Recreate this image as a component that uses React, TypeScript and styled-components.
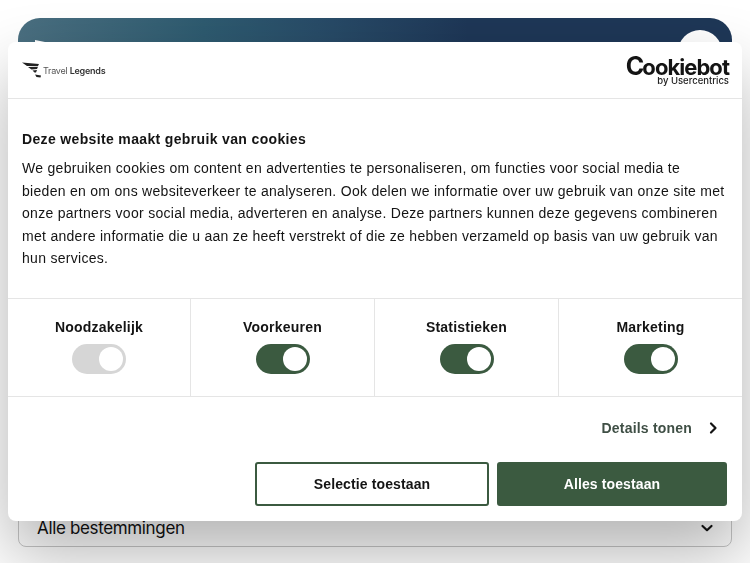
import React from "react";
import styled, { createGlobalStyle } from "styled-components";

const Global = createGlobalStyle`
  html, body { margin: 0; padding: 0; background: #fff; overflow: hidden; }
  body { width: 750px; height: 563px; font-family: "Liberation Sans", Arial, sans-serif; color: #141414; }
`;

const Page = styled.main`
  width: 750px;
  height: 563px;
  box-sizing: border-box;
  padding: 18px 18px 16px;
  display: flex;
  flex-direction: column;
  justify-content: space-between;
`;

const Hero = styled.div`
  position: relative;
  height: 120px;
  border-radius: 22px 22px 0 0;
  background: linear-gradient(90deg, #4a6f80 0%, #2e5b70 26%, #284c68 42%, #1e3757 63%, #1e3757 100%);
`;

const HeroCircle = styled.span`
  position: absolute;
  top: 12px;
  right: 10px;
  width: 44px;
  height: 44px;
  border-radius: 50%;
  background: #fff;
`;

const HeroFlag = styled.span`
  position: absolute;
  top: 22px;
  left: 17px;
  width: 20px;
  height: 4px;
  background: #fff;
  clip-path: polygon(0 0, 100% 100%, 0 100%);
`;

const Select = styled.div`
  height: 48px;
  box-sizing: border-box;
  border: 1px solid #c8c8c8;
  border-radius: 8px;
  background: #fff;
  display: flex;
  align-items: center;
  justify-content: space-between;
  padding: 10px 16px 0 18px;
  font-family: "Inter", sans-serif;
  font-size: 17px;
  letter-spacing: -0.35px;
  color: #111;
`;

const Dialog = styled.section`
  position: fixed;
  left: 8px;
  top: 42px;
  width: 734px;
  height: 479px;
  background: #fff;
  border-radius: 8px;
  box-shadow: 0 32px 68px rgba(0, 0, 0, 0.3);
  display: flex;
  flex-direction: column;
`;

const Header = styled.header`
  height: 57px;
  flex: none;
  box-sizing: border-box;
  display: flex;
  align-items: center;
  justify-content: space-between;
  padding: 0 13px 0 14px;
  border-bottom: 1px solid #e5e5e5;
`;

const TravelLogo = styled.div`
  display: flex;
  align-items: center;
  gap: 1px;
`;

const TravelName = styled.span`
  font-family: "Inter", sans-serif;
  font-size: 9px;
  letter-spacing: -0.25px;
  color: #555;
`;

const TravelStrong = styled.span`
  font-weight: 600;
  color: #333;
`;

const BotLogo = styled.div`
  display: flex;
  flex-direction: column;
  align-items: flex-end;
  color: #141414;
  padding-top: 1px;
`;

const BotName = styled.span`
  font-family: "Inter", sans-serif;
  font-weight: 700;
  font-size: 22px;
  line-height: 22px;
  letter-spacing: -0.95px;
`;

const BotInitial = styled.span`
  font-size: 25px;
  letter-spacing: -2px;
`;

const BotSub = styled.span`
  font-family: "Inter", sans-serif;
  font-weight: 500;
  font-size: 9.5px;
  line-height: 11px;
  margin-top: -3px;
  color: #222;
`;

const Body = styled.div`
  height: 200px;
  flex: none;
  box-sizing: border-box;
  padding: 31px 14px 0;
  border-bottom: 1px solid #e5e5e5;
`;

const Title = styled.h2`
  margin: 0 0 9px;
  font-size: 14px;
  line-height: 18px;
  font-weight: 700;
  letter-spacing: 0.35px;
`;

const Copy = styled.p`
  margin: 0;
  max-width: 704px;
  font-size: 14px;
  line-height: 22.5px;
  letter-spacing: 0.29px;
  color: #141414;
`;

const Toggles = styled.div`
  height: 98px;
  flex: none;
  box-sizing: border-box;
  display: grid;
  grid-template-columns: 182px 184px 184px 184px;
  border-bottom: 1px solid #e5e5e5;
`;

const ToggleCell = styled.div`
  display: flex;
  flex-direction: column;
  align-items: center;
  padding-top: 20px;
  gap: 8px;
  & + & { border-left: 1px solid #e5e5e5; }
`;

const ToggleLabel = styled.span`
  font-size: 14px;
  line-height: 17px;
  font-weight: 700;
  letter-spacing: 0.22px;
`;

const Track = styled.span<{ $on: boolean }>`
  width: 54px;
  height: 30px;
  box-sizing: border-box;
  border-radius: 15px;
  padding: 3px;
  display: flex;
  justify-content: flex-end;
  background: ${(p) => (p.$on ? "#3b5a40" : "#d6d6d6")};
`;

const Knob = styled.span`
  width: 24px;
  height: 24px;
  border-radius: 50%;
  background: #fff;
`;

const DetailsRow = styled.div`
  display: flex;
  justify-content: flex-end;
  align-items: center;
  gap: 13px;
  padding: 22px 21px 0 0;
  height: 18px;
`;

const DetailsText = styled.span`
  font-size: 14px;
  font-weight: 700;
  letter-spacing: 0.2px;
  color: #3f4f45;
`;

const Buttons = styled.div`
  display: flex;
  justify-content: flex-end;
  gap: 8px;
  padding: 25px 15px 0 0;
`;

const Button = styled.button<{ $primary?: boolean }>`
  height: 44px;
  width: ${(p) => (p.$primary ? "230px" : "234px")};
  box-sizing: border-box;
  border: 2px solid #3b5a40;
  border-radius: 3px;
  background: ${(p) => (p.$primary ? "#3b5a40" : "#fff")};
  color: ${(p) => (p.$primary ? "#fff" : "#141414")};
  font-family: "Liberation Sans", Arial, sans-serif;
  font-size: 14px;
  font-weight: 700;
  letter-spacing: 0.12px;
`;

const Chevron = ({ d, size = 16 }: { d: string; size?: number }) => (
  <svg width={size} height={size} viewBox="0 0 16 16" fill="none" stroke="#141414" strokeWidth="2.2" strokeLinecap="round" strokeLinejoin="round">
    <path d={d} />
  </svg>
);

const categories = [
  { name: "Noodzakelijk", on: false },
  { name: "Voorkeuren", on: true },
  { name: "Statistieken", on: true },
  { name: "Marketing", on: true },
];

export default function App() {
  return (
    <>
      <Global />
      <Page>
        <Hero>
          <HeroFlag />
          <HeroCircle />
        </Hero>
        <Select>
          <span>Alle bestemmingen</span>
          <Chevron d="M3.500 6l4.500 4.200L12.500 6" />
        </Select>
      </Page>
      <Dialog>
        <Header>
          <TravelLogo>
            <svg width="20" height="16" viewBox="0 0 20 16" fill="#222">
              <path d="M0 0.500L17 2 16 4 5 4zM6 5L16 4.800 15 7 9.500 7.500zM10.500 8.500L15 8 14 10.500 12.500 10.500zM13 12.500L19 13.500 18.500 15.500 14.500 15z" />
            </svg>
            <TravelName>
              Travel <TravelStrong>Legends</TravelStrong>
            </TravelName>
          </TravelLogo>
          <BotLogo>
            <BotName>
              <BotInitial>C</BotInitial>ookiebot
            </BotName>
            <BotSub>by Usercentrics</BotSub>
          </BotLogo>
        </Header>
        <Body>
          <Title>Deze website maakt gebruik van cookies</Title>
          <Copy>
            We gebruiken cookies om content en advertenties te personaliseren, om functies voor social media te bieden en om ons websiteverkeer te analyseren. Ook delen we informatie over uw gebruik van onze site met onze partners voor social media, adverteren en analyse. Deze partners kunnen deze gegevens combineren met andere informatie die u aan ze heeft verstrekt of die ze hebben verzameld op basis van uw gebruik van hun services.
          </Copy>
        </Body>
        <Toggles>
          {categories.map((c) => (
            <ToggleCell key={c.name}>
              <ToggleLabel>{c.name}</ToggleLabel>
              <Track $on={c.on}>
                <Knob />
              </Track>
            </ToggleCell>
          ))}
        </Toggles>
        <DetailsRow>
          <DetailsText>Details tonen</DetailsText>
          <Chevron d="M6 3.500l4.500 4.500L6 12.500" />
        </DetailsRow>
        <Buttons>
          <Button>Selectie toestaan</Button>
          <Button $primary>Alles toestaan</Button>
        </Buttons>
      </Dialog>
    </>
  );
}
